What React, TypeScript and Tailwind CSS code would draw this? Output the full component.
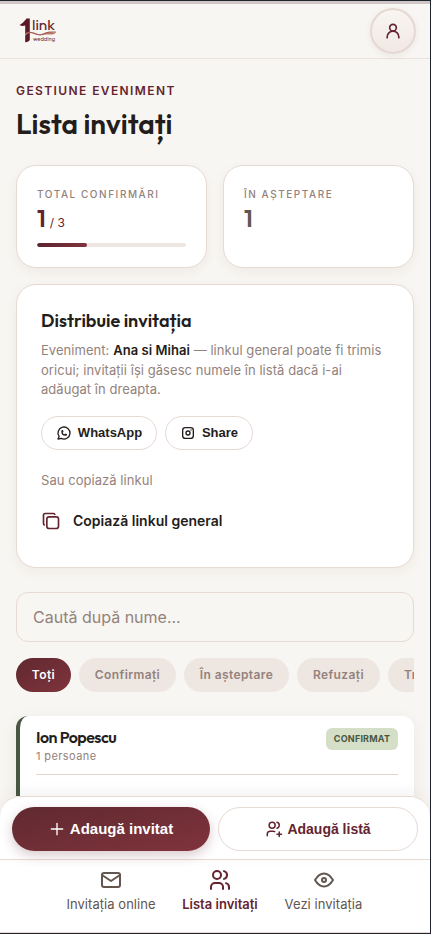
import React from "react";

const display = "font-['Outfit','Lato',sans-serif]";

function Logo() {
  return (
    <svg width="40" height="28" viewBox="0 0 40 28" aria-label="1link wedding">
      <path d="M1.500 8C4.500 6.800 6.300 4 8.500 1.500H11.800V22.500C11.800 24 10 25 7.200 25.200V8.600C5.500 9.200 3.500 9.300 1.500 8Z" fill="#5b1826" />
      <path d="M7 16.500C11 13 16 15.500 20 17C24 18.500 27 14.500 31 14.800C34 15 36 15.500 38.500 15C35 19 31 17 27 17.800C22 18.800 19 18.500 16 17C12 15.300 10 16 7 19Z" fill="#b97868" />
      <path d="M7 16.500C13 13.500 17 17.800 22 17.600C28 17 29 14 38 14.800" fill="none" stroke="#8d4144" strokeWidth=".5" />
      <text x="14" y="12.500" fontSize="14" fontFamily="Outfit, Lato, sans-serif" fill="#65232f" textLength="23" lengthAdjust="spacingAndGlyphs">link</text>
      <text x="15" y="23.500" fontSize="6" fontFamily="Outfit, Lato, sans-serif" fill="#79343d" textLength="22" lengthAdjust="spacingAndGlyphs">wedding</text>
    </svg>
  );
}

type IconProps = { size: number; width?: number; className?: string; children: React.ReactNode };
function Icon({ size, width = 2, className = "", children }: IconProps) {
  return (
    <svg width={size} height={size} viewBox="0 0 24 24" fill="none" stroke="currentColor" strokeWidth={width} strokeLinecap="round" strokeLinejoin="round" className={"shrink-0 " + className}>
      {children}
    </svg>
  );
}

function Chip({ className, children }: { className: string; children: React.ReactNode }) {
  return (
    <button className={"flex h-[34px] shrink-0 items-center justify-center rounded-full text-[12px] font-semibold tracking-[0.4px] " + className}>
      {children}
    </button>
  );
}

export default function App() {
  return (
    <div className="flex h-[934px] w-[431px] flex-col overflow-hidden border-t border-r border-b border-[#20242e] bg-[#f8f6f2] font-['Inter',sans-serif] text-[#231d1b]">
      <div className="h-[3px] shrink-0 bg-[#cfc6c6]" />
      <header className="flex h-[55px] shrink-0 items-center justify-between border-b border-[#ebe0dc] pr-[14px] pl-[18px]">
        <Logo />
        <button className="flex size-[46px] items-center justify-center rounded-full border-2 border-[#e5d8d2] bg-linear-to-b from-[#f8f5f1] to-[#f2e8e4] text-[#64242f] shadow-[0_2px_6px_rgba(90,30,40,0.07)]">
          <Icon size={20}>
            <circle cx="12" cy="8" r="4" />
            <path d="M5 20v-.8a7 7 0 0 1 14 0v.8" />
          </Icon>
        </button>
      </header>

      <main className="h-[737px] shrink-0 overflow-hidden px-4 pt-[24px]">
        <p className="h-4 text-[12px] leading-4 font-semibold tracking-[1.400px] whitespace-nowrap text-[#64242f]">GESTIUNE EVENIMENT</p>
        <h1 className={display + " mt-[5px] h-[41px] text-[28px] leading-[40px] font-semibold"}>Lista invitați</h1>

        <div className="mt-5 grid grid-cols-2 gap-4">
          <section className="h-[103px] rounded-[20px] border border-[#e7d9d3] bg-white px-5 pt-5 shadow-[0_4px_12px_rgba(70,40,30,0.05)]">
            <p className="text-[10px] leading-4 font-medium tracking-[1.550px] whitespace-nowrap text-[#93827c]">TOTAL CONFIRMĂRI</p>
            <p className="flex h-8 items-baseline text-[#64242f]">
              <span className={display + " text-[24px] leading-8 font-semibold"}>1</span>
              <span className="ml-1 text-[12px]">/ 3</span>
            </p>
            <div className="mt-[9px] h-1 overflow-hidden rounded-full bg-[#eee6e0]">
              <div className="h-1 w-[50px] rounded-full bg-linear-to-r from-[#5c2530] to-[#80333e]" />
            </div>
          </section>
          <section className="h-[103px] rounded-[20px] border border-[#e7d9d3] bg-white px-5 pt-5 shadow-[0_4px_12px_rgba(70,40,30,0.05)]">
            <p className="text-[10px] leading-4 font-medium tracking-[1.550px] whitespace-nowrap text-[#93827c]">ÎN AȘTEPTARE</p>
            <p className={display + " h-8 text-[24px] leading-8 font-semibold text-[#625650]"}>1</p>
          </section>
        </div>

        <section className="mt-4 h-[284px] rounded-[20px] border border-[#e7d9d3] bg-white px-6 pt-[22px] shadow-[0_4px_12px_rgba(70,40,30,0.05)]">
          <h2 className={display + " h-7 text-[18px] leading-7 font-semibold"}>Distribuie invitația</h2>
          <p className="mt-[6px] text-[13px] leading-[19.500px] tracking-[0.050px] whitespace-nowrap text-[#93827c]">
            Eveniment: <strong className="font-semibold text-[#231d1b]">Ana si Mihai</strong> — linkul general poate fi trimis<br />
            oricui; invitații își găsesc numele în listă dacă i-ai<br />
            adăugat în dreapta.
          </p>
          <div className="mt-4 flex gap-2 font-['Liberation_Sans',Arial,sans-serif] text-[13px] font-bold">
            <button className="flex h-[34px] w-[116px] items-center justify-center gap-[6px] rounded-full border border-[#e7d9d3]">
              <Icon size={16}>
                <path d="m3 21 1.650-3.800a9 9 0 1 1 3.400 2.900L3 21" />
                <path d="M9 10a.5.500 0 0 0 1 0V9a.5.500 0 0 0-1 0v1a5 5 0 0 0 5 5h1a.5.500 0 0 0 0-1h-1a.5.500 0 0 0 0 1" />
              </Icon>
              WhatsApp
            </button>
            <button className="flex h-[34px] w-[88px] items-center justify-center gap-[6px] rounded-full border border-[#e7d9d3]">
              <Icon size={16}>
                <rect x="4" y="4" width="16" height="16" rx="4" />
                <circle cx="12" cy="12" r="3" />
                <path d="M16.500 7.500v.01" />
              </Icon>
              Share
            </button>
          </div>
          <p className="mt-5 text-[13px] leading-5 tracking-[0.050px] text-[#93827c]">Sau copiază linkul</p>
          <button className="mt-[21px] flex h-5 items-center gap-3 text-[14px] font-semibold">
            <Icon size={20} className="text-[#64242f]">
              <rect x="7" y="7" width="14" height="14" rx="2.700" />
              <path d="M4 16.700A2 2 0 0 1 3 15V5c0-1.100.9-2 2-2h10c.75 0 1.160.4 1.500 1" />
            </Icon>
            Copiază linkul general
          </button>
        </section>

        <input placeholder="Caută după nume..." className="mt-6 block h-[50px] w-full rounded-[12px] border border-[#e7d9d3] px-4 text-[16px] placeholder:text-[#93827c]" />

        <div className="mt-4 flex gap-2 overflow-hidden">
          <Chip className="w-[55px] bg-linear-to-br from-[#602930] to-[#80333c] text-white">Toți</Chip>
          <Chip className="w-[97px] bg-[#eee6e1] text-[#93827c]">Confirmați</Chip>
          <Chip className="w-[105px] bg-[#eee6e1] text-[#93827c]">În așteptare</Chip>
          <Chip className="w-[83px] bg-[#eee6e1] text-[#93827c]">Refuzați</Chip>
          <Chip className="bg-[#eee6e1] px-4 text-[#93827c]">Trimiși</Chip>
        </div>

        <article className="mt-6 h-[140px] rounded-[12px] border-l-4 border-[#485741] bg-linear-to-b from-white from-50% to-[#f7f7f7] px-4 pt-3 shadow-[0_4px_16px_rgba(70,40,30,0.06)]">
          <div className="flex h-[47px] items-start justify-between border-b border-[#e7d5d0]">
            <div>
              <h3 className={display + " h-[19px] text-[16px] leading-[18px] font-semibold tracking-[-0.500px]"}>Ion Popescu</h3>
              <p className="mt-[1px] text-[11px] leading-4 tracking-[0.4px] text-[#93827c]">1 persoane</p>
            </div>
            <span className="flex h-[22px] w-[72px] items-center justify-center rounded-[6px] bg-[#d5dfc7] text-[9px] font-bold tracking-[0.2px] text-[#485741]">CONFIRMAT</span>
          </div>
        </article>
      </main>

      <div className="relative h-[64px] shrink-0 rounded-t-[20px] border-t border-b border-[#e7d9d3] bg-white pt-[10px] pr-3 pl-3 shadow-[0_-4px_14px_rgba(70,40,30,0.05)]">
        <div className="flex gap-2 font-['Liberation_Sans',Arial,sans-serif] font-bold">
          <button className="flex h-11 w-[198px] items-center justify-center gap-[5px] rounded-full bg-linear-to-br from-[#602930] to-[#80333c] text-[15px] text-white shadow-[0_4px_12px_rgba(100,36,47,0.25)]">
            <Icon size={16}><path d="M3.500 12h17M12 3.500v17" /></Icon>
            Adaugă invitat
          </button>
          <button className="flex h-11 w-[200px] items-center justify-center gap-1 rounded-full border border-[#e7d9d3] text-[14px] text-[#64242f]">
            <Icon size={18}>
              <circle cx="9.500" cy="7" r="4" />
              <path d="M3 21v-2a4 4 0 0 1 4-4h4c.7 0 1.400.2 2 .5M16 3.130a4 4 0 0 1 0 7.750M16 19h6M19 16v6" />
            </Icon>
            Adaugă listă
          </button>
        </div>
      </div>

      <nav className="flex h-[73px] shrink-0 justify-center gap-[26px] border-b border-[#e7d9d3] bg-white pt-[8px] pr-[1px] text-[13px] leading-5 tracking-[0.050px] text-[#625650]">
        <a className="flex w-[90px] flex-col items-center gap-[2px] whitespace-nowrap">
          <Icon size={24}><rect x="3" y="5" width="18" height="14" rx="2" /><path d="m3 7 9 6 9-6" /></Icon>
          Invitația online
        </a>
        <a className="flex w-[76px] flex-col items-center gap-[2px] font-semibold tracking-normal whitespace-nowrap text-[#64242f]">
          <Icon size={24}><circle cx="9" cy="7" r="4" /><path d="M3 21v-2a4 4 0 0 1 4-4h4a4 4 0 0 1 4 4v2M16 3.130a4 4 0 0 1 0 7.750M21 21v-2a4 4 0 0 0-3-3.850" /></Icon>
          Lista invitați
        </a>
        <a className="flex w-[79px] flex-col items-center gap-[2px] whitespace-nowrap">
          <Icon size={24}><path d="M3 12c3-5 6-6.500 9-6.500s6 1.500 9 6.500c-3 5-6 6.500-9 6.500S6 17 3 12Z" /><circle cx="12" cy="12" r="2" /></Icon>
          Vezi invitația
        </a>
      </nav>
    </div>
  );
}
